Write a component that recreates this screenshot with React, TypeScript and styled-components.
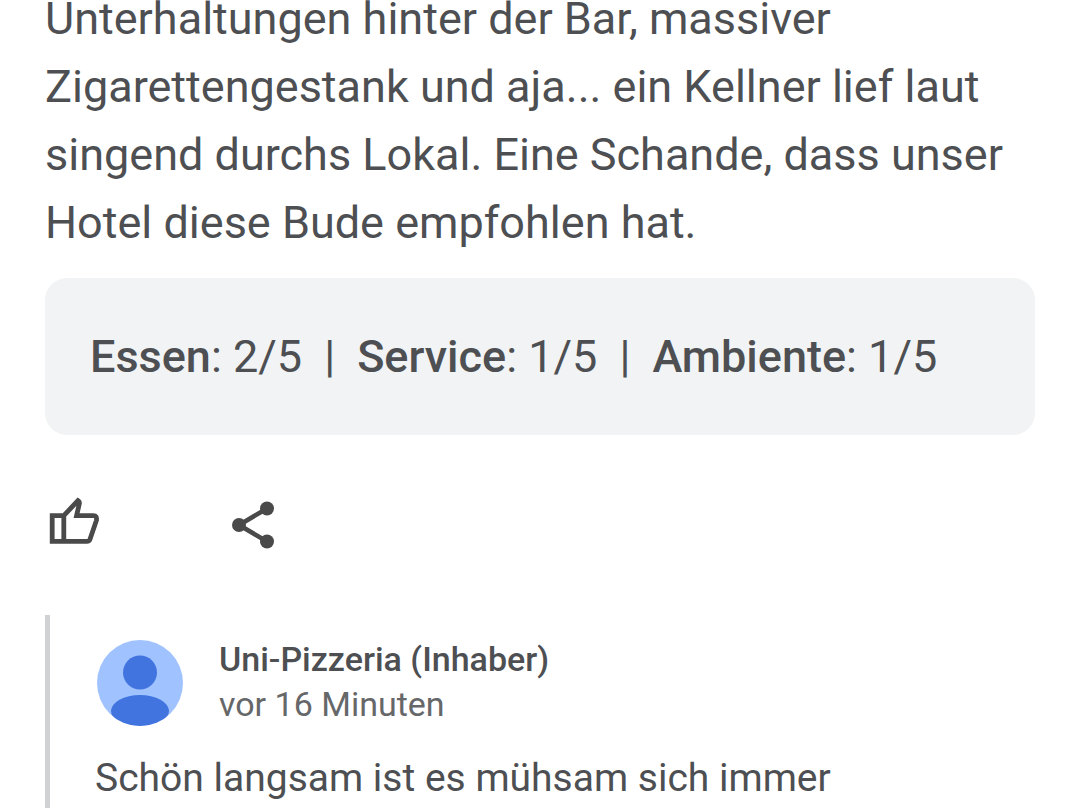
import React from "react";
import styled, { createGlobalStyle } from "styled-components";

const GlobalStyle = createGlobalStyle`
  * { box-sizing: border-box; }
  body {
    margin: 0;
    background: #fff;
    color: #4d4f52;
    font-family: Roboto, "Liberation Sans", sans-serif;
    overflow: hidden;
  }
`;

const Review = styled.article`
  padding: 0 45px;
  margin-top: -15px;
`;

const ReviewText = styled.p`
  margin: 0;
  font-size: 45px;
  line-height: 68px;
`;

const Line = styled.span`
  display: block;
  white-space: nowrap;
`;

const Ratings = styled.ul`
  display: flex;
  align-items: center;
  margin: 21px 0 0;
  padding: 45px 45px 44px;
  list-style: none;
  background: #f1f3f4;
  border-radius: 22px;
  font-size: 45px;
  line-height: 68px;
  white-space: nowrap;
`;

const Rating = styled.li`
  & + &::before {
    content: "|";
    margin: 0 22px;
  }
`;

const RatingName = styled.span`
  font-weight: 500;
`;

const Actions = styled.div`
  display: flex;
  gap: 122px;
  margin-top: 56px;
`;

const IconButton = styled.button`
  display: flex;
  padding: 0;
  border: 0;
  background: none;
  color: #4a4a4a;
  cursor: pointer;
`;

const Reply = styled.section`
  margin-top: 58px;
  padding: 22px 0 24px 45px;
  border-left: 5px solid #d0d1d2;
`;

const Owner = styled.header`
  display: flex;
  align-items: center;
  gap: 34px;
`;

const OwnerName = styled.h3`
  margin: 0;
  font-size: 34px;
  line-height: 45px;
  font-weight: 500;
`;

const Time = styled.div`
  font-size: 34px;
  line-height: 45px;
  color: #666769;
`;

const ReplyText = styled.p`
  margin: 21px 0 0;
  font-size: 39px;
  line-height: 60px;
`;

const ratings = [
  { name: "Essen", score: "2/5" },
  { name: "Service", score: "1/5" },
  { name: "Ambiente", score: "1/5" },
];

const reviewLines = [
  "Unterhaltungen hinter der Bar, massiver",
  "Zigarettengestank und aja... ein Kellner lief laut",
  "singend durchs Lokal. Eine Schande, dass unser",
  "Hotel diese Bude empfohlen hat.",
];

export default function App() {
  return (
    <>
      <GlobalStyle />
      <Review>
        <ReviewText>
          {reviewLines.map((line) => (
            <Line key={line}>{line}</Line>
          ))}
        </ReviewText>
        <Ratings>
          {ratings.map((r) => (
            <Rating key={r.name}>
              <RatingName>{r.name}</RatingName>: {r.score}
            </Rating>
          ))}
        </Ratings>
        <Actions>
          <IconButton aria-label="Gefällt mir">
            <svg width="60" height="66" viewBox="0 0 60 66" fill="none" stroke="currentColor" strokeWidth="4.8">
              <path d="M7.200 24.600H18.800V50.400H7.200ZM18.800 24.600 33 9.600Q34.800 10.600 34.300 12.800L31.600 24.600H48.500Q52.200 24.600 51.400 29.500L45 48.200Q44.200 50.400 42 50.400H18.800" />
            </svg>
          </IconButton>
          <IconButton aria-label="Teilen">
            <svg width="60" height="66" viewBox="0 0 60 66" fill="currentColor">
              <path d="M40 17.500 12 34 40 50.500" fill="none" stroke="currentColor" strokeWidth="4.600" />
              <circle cx="40" cy="17.500" r="7" />
              <circle cx="12" cy="34" r="7" />
              <circle cx="40" cy="50.500" r="7" />
            </svg>
          </IconButton>
        </Actions>
        <Reply>
          <Owner>
            <svg width="90" height="90" viewBox="0 0 90 90" aria-hidden="true">
              <clipPath id="avatar">
                <circle cx="45" cy="46" r="43" />
              </clipPath>
              <circle cx="45" cy="46" r="43" fill="#a0c3ff" />
              <g clipPath="url(#avatar)" fill="#4274e0">
                <circle cx="45" cy="35.500" r="17" />
                <ellipse cx="45" cy="74" rx="29" ry="16" />
              </g>
            </svg>
            <div>
              <OwnerName>Uni-Pizzeria (Inhaber)</OwnerName>
              <Time>vor 16 Minuten</Time>
            </div>
          </Owner>
          <ReplyText>Schön langsam ist es mühsam sich immer</ReplyText>
        </Reply>
      </Review>
    </>
  );
}
